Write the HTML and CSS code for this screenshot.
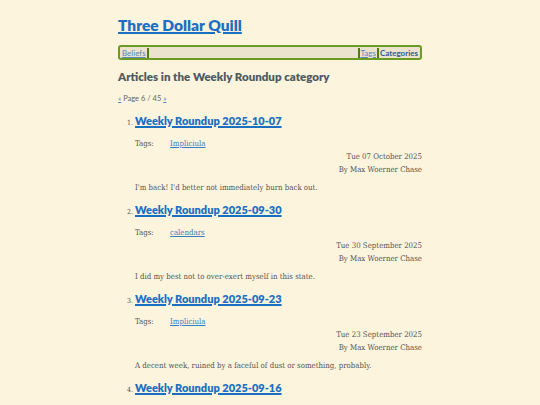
FILE: index.html
```html
<!DOCTYPE html>
<html lang="en">
<head>
<meta charset="utf-8">
<title>Three Dollar Quill</title>
<link rel="stylesheet" href="styles.css">
</head>
<body>
<div class="page">
  <header class="site-header">
    <h1 class="site-title"><a href="#">Three Dollar Quill</a></h1>
    <nav class="nav">
      <ul class="nav-left">
        <li><a href="#">Beliefs</a></li>
      </ul>
      <ul class="nav-right">
        <li><a href="#">Tags</a></li>
        <li><a href="#" class="current">Categories</a></li>
      </ul>
    </nav>
  </header>
  <main>
    <h2 class="cat-title">Articles in the Weekly Roundup category</h2>
    <p class="pager"><a href="#">«</a> Page 6 / 45 <a href="#">»</a></p>
    <ol class="articles" start="1">
      <li class="article">
        <h3 class="art-title"><a href="#">Weekly Roundup 2025-10-07</a></h3>
        <p class="tags"><span class="tags-label">Tags:</span><a href="#">Impliciula</a></p>
        <p class="meta">Tue 07 October 2025<br>By Max Woerner Chase</p>
        <p class="summary">I'm back! I'd better not immediately burn back out.</p>
      </li>
      <li class="article">
        <h3 class="art-title"><a href="#">Weekly Roundup 2025-09-30</a></h3>
        <p class="tags"><span class="tags-label">Tags:</span><a href="#">calendars</a></p>
        <p class="meta">Tue 30 September 2025<br>By Max Woerner Chase</p>
        <p class="summary">I did my best not to over-exert myself in this state.</p>
      </li>
      <li class="article">
        <h3 class="art-title"><a href="#">Weekly Roundup 2025-09-23</a></h3>
        <p class="tags"><span class="tags-label">Tags:</span><a href="#">Impliciula</a></p>
        <p class="meta">Tue 23 September 2025<br>By Max Woerner Chase</p>
        <p class="summary">A decent week, ruined by a faceful of dust or something, probably.</p>
      </li>
      <li class="article">
        <h3 class="art-title"><a href="#">Weekly Roundup 2025-09-16</a></h3>
      </li>
    </ol>
  </main>
</div>
</body>
</html>
```

FILE: styles.css
```css
html, body {
  margin: 0;
  padding: 0;
  background: #fcf4dd;
}
body {
  font-family: "DejaVu Serif Condensed", "DejaVu Serif", serif;
  color: #555;
}
.page {
  width: 304px;
  margin: 0 auto;
  padding-top: 15px;
}
.site-title {
  margin: 0;
  font-family: "Lato", sans-serif;
  font-weight: 800;
  font-size: 15.5px;
  line-height: 20px;
}
.site-title a {
  color: #1b6fc3;
  text-decoration-thickness: 2px;
}
.nav {
  margin-top: 10px;
  display: flex;
  justify-content: space-between;
  align-items: center;
  height: 11px;
  padding: 0 2px;
  background: #ebe3cd;
  border: 2px solid #6c9b24;
  border-radius: 3px;
  font-family: "Lato", sans-serif;
  font-size: 8px;
}
.nav ul {
  list-style: none;
  margin: 0;
  padding: 0;
  display: flex;
  align-items: center;
}
.nav li {
  line-height: 10px;
}
.nav-left li {
  border-right: 2px solid #4f7d12;
  padding-right: 1px;
}
.nav-right li {
  border-left: 2px solid #4f7d12;
  padding-left: 1px;
  margin-left: 1px;
}
.nav a {
  color: #5a86b8;
}
.nav a.current {
  color: #2d5d8f;
  font-weight: bold;
  text-decoration: none;
}
.cat-title {
  margin: 9px 0 0;
  font-family: "Lato", sans-serif;
  font-weight: 800;
  font-size: 11.5px;
  line-height: 16px;
  color: #4e5b63;
}
.pager {
  margin: 9px 0 0;
  font-family: "Lato", sans-serif;
  font-size: 7.5px;
  line-height: 10px;
  color: #666;
}
.pager a {
  color: #5a86b8;
}
.articles {
  margin: 9px 0 0;
  padding-left: 17px;
  font-size: 7.8px;
}
.article {
  height: 89px;
}
.article::marker {
  font-size: 7px;
  color: #555;
}
.art-title {
  margin: 0;
  display: inline;
  font-family: "Lato", sans-serif;
  font-weight: 800;
  font-size: 11px;
  line-height: 16px;
}
.art-title a {
  color: #1b6fc3;
  text-decoration-thickness: 1.5px;
}
.tags {
  margin: 10px 0 0;
  font-size: 7.8px;
  line-height: 10px;
}
.tags-label {
  display: inline-block;
  width: 35px;
}
.tags a {
  color: #3b7cc0;
}
.meta {
  margin: 1px 0 0;
  text-align: right;
  font-size: 7.8px;
  line-height: 13px;
}
.summary {
  margin: 7px 0 0;
  font-size: 7.8px;
  line-height: 10px;
}
```
